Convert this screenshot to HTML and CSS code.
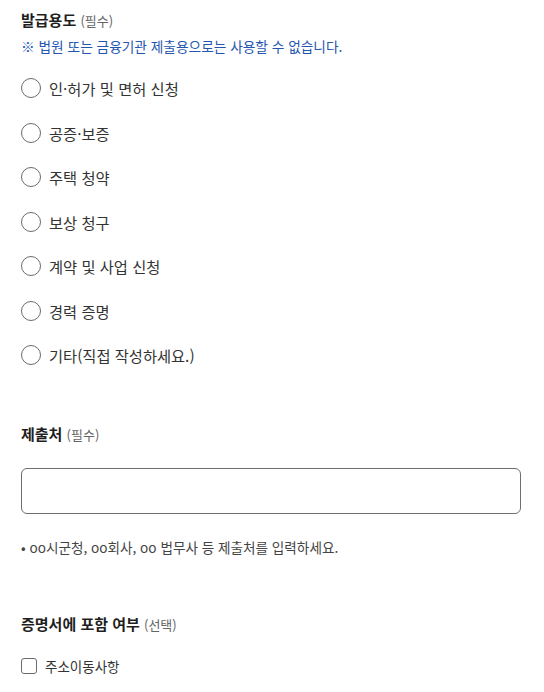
FILE: index.html
```html
<!DOCTYPE html>
<html lang="ko">
<head>
    <meta charset="UTF-8">
    <meta name="viewport" content="width=device-width, initial-scale=1.0">
    <title>증명서 발급</title>
    <link rel="stylesheet" href="styles.css">
</head>

<body>
    <div class="form">
        <!-- 발급용도 -->
        <div class="section">
            <div class="titolo">발급용도 <span class="sub">(필수)</span></div>
            <div class="nota">※ 법원 또는 금융기관 제출용으로는 사용할 수 없습니다.</div>
            <div class="opzioni">
                <label class="opzione"><input type="radio" name="uso"><span>인·허가 및 면허 신청</span></label>
                <label class="opzione"><input type="radio" name="uso"><span>공증·보증</span></label>
                <label class="opzione"><input type="radio" name="uso"><span>주택 청약</span></label>
                <label class="opzione"><input type="radio" name="uso"><span>보상 청구</span></label>
                <label class="opzione"><input type="radio" name="uso"><span>계약 및 사업 신청</span></label>
                <label class="opzione"><input type="radio" name="uso"><span>경력 증명</span></label>
                <label class="opzione"><input type="radio" name="uso"><span>기타(직접 작성하세요.)</span></label>
            </div>
        </div>

        <!-- 제출처 -->
        <div class="section sec2">
            <div class="titolo">제출처 <span class="sub">(필수)</span></div>
            <input class="campo" type="text">
            <div class="aiuto">• oo시군청, oo회사, oo 법무사 등 제출처를 입력하세요.</div>
        </div>

        <!-- 포함 여부 -->
        <div class="section sec3">
            <div class="titolo">증명서에 포함 여부 <span class="sub">(선택)</span></div>
            <label class="check"><input type="checkbox"><span>주소이동사항</span></label>
        </div>
    </div>
</body>
</html>
```

FILE: styles.css
```css
body {
    margin: 0;
    background-color: #fff;
    color: #222;
    font-family: "Noto Sans CJK KR", "Noto Sans", sans-serif;
}

.form {
    padding: 9px 23px 0 21px;
}

.titolo {
    font-size: 15px;
    font-weight: bold;
    line-height: 22px;
    color: #1f1f1f;
}

.sub {
    font-size: 13px;
    font-weight: normal;
    color: #666;
}

.nota {
    margin-top: 4px;
    font-size: 13.7px;
    line-height: 20px;
    color: #2456b0;
}

.opzioni {
    margin-top: 21px;
    display: flex;
    flex-direction: column;
    gap: 22.5px;
}

.opzione {
    display: flex;
    align-items: center;
    gap: 8px;
    font-size: 15.3px;
    line-height: 22px;
    color: #333;
}

.opzione input {
    appearance: none;
    margin: 0;
    width: 20px;
    height: 20px;
    border: 1.5px solid #6b6b6b;
    border-radius: 50%;
    box-sizing: border-box;
}

.sec2 {
    margin-top: 57px;
}

.campo {
    display: block;
    margin-top: 22px;
    width: 100%;
    height: 46px;
    box-sizing: border-box;
    border: 1px solid #6e6e6e;
    border-radius: 6px;
}

.aiuto {
    margin-top: 23px;
    font-size: 13.6px;
    line-height: 20px;
    color: #444;
}

.sec3 {
    margin-top: 56px;
}

.check {
    margin-top: 20px;
    display: flex;
    align-items: center;
    gap: 8px;
    font-size: 13.5px;
    line-height: 20px;
    color: #333;
}

.check input {
    appearance: none;
    margin: 0;
    width: 16px;
    height: 16px;
    border: 1.5px solid #6b6b6b;
    border-radius: 3px;
    box-sizing: border-box;
}
```
